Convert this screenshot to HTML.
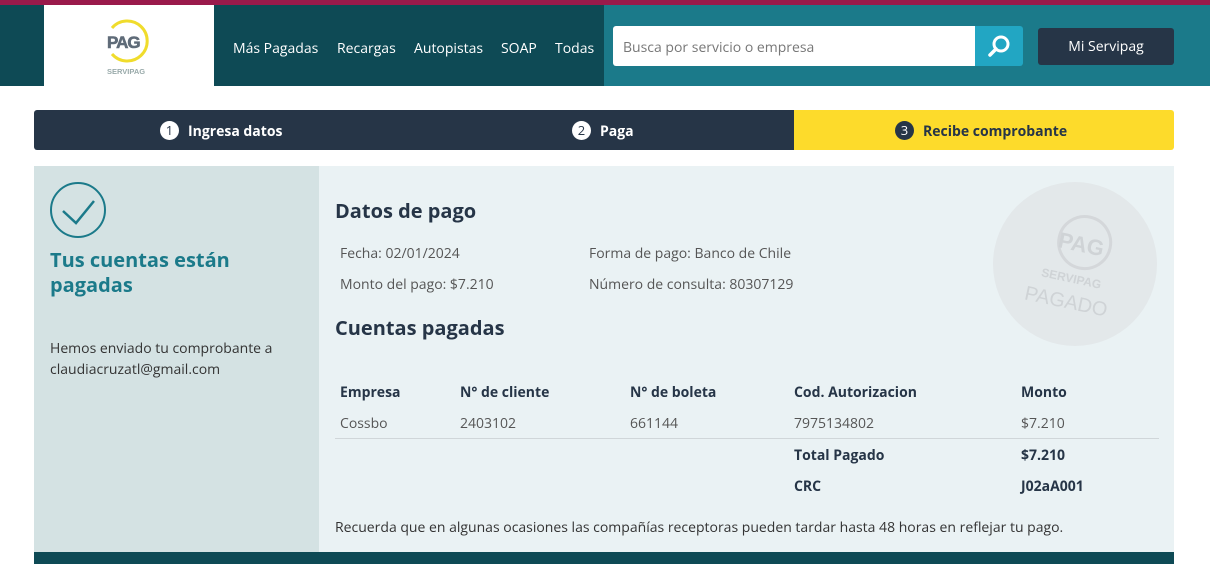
<!DOCTYPE html>
<html><head><meta charset="utf-8"><style>
*{margin:0;padding:0;box-sizing:border-box}
body{width:1210px;height:564px;overflow:hidden;background:#fff;font-family:"Open Sans","Liberation Sans",sans-serif;position:relative;color:#263547}
.a{position:absolute}
.nav{color:#fff;font-size:14px;top:39px}
.t{font-size:14px;color:#555}
.h{font-size:14px;font-weight:bold;color:#263547}
</style></head><body>
<div class="a" style="left:0;top:0;width:1210px;height:5px;background:#9a1a4b"></div>
<div class="a" style="left:0;top:5px;width:604px;height:81px;background:#0e4a55"></div>
<div class="a" style="left:604px;top:5px;width:606px;height:81px;background:#1b7a8a"></div>
<div class="a" style="left:44px;top:5px;width:170px;height:81px;background:#fff"></div>
<svg class="a" style="left:104px;top:16px" width="50" height="60" viewBox="0 0 50 60">
<path d="M8 12 A20 20 0 1 1 8 38" fill="none" stroke="#f0dc2c" stroke-width="3"/>
<text x="3" y="32" font-family="Liberation Sans" font-weight="bold" font-size="17" fill="#5f6b78" stroke="#5f6b78" stroke-width="0.6" letter-spacing="-1">PAG</text>
<text x="3" y="58" font-family="Liberation Sans" font-weight="bold" font-size="7.5" fill="#9aa">SERVIPAG</text>
</svg>
<div class="a nav" style="left:233px">Más Pagadas</div>
<div class="a nav" style="left:337px">Recargas</div>
<div class="a nav" style="left:414px">Autopistas</div>
<div class="a nav" style="left:501px">SOAP</div>
<div class="a nav" style="left:555px">Todas</div>
<div class="a" style="left:613px;top:26px;width:362px;height:40px;background:#fff;border-radius:3px 0 0 3px;font-size:14px;color:#777;padding:12px 10px">Busca por servicio o empresa</div>
<div class="a" style="left:975px;top:26px;width:48px;height:40px;background:#22a6c3;border-radius:0 3px 3px 0"></div>
<svg class="a" style="left:987px;top:34px" width="24" height="24" viewBox="0 0 24 24"><circle cx="14" cy="10" r="7" fill="none" stroke="#fff" stroke-width="3"/><path d="M9 15 L3 21" stroke="#fff" stroke-width="3.5" stroke-linecap="round"/></svg>
<div class="a" style="left:1038px;top:28px;width:136px;height:37px;background:#263547;border-radius:3px;color:#fff;font-size:14px;text-align:center;line-height:37px">Mi Servipag</div>

<div class="a" style="left:34px;top:110px;width:760px;height:40px;background:#263547;border-radius:3px 0 0 3px"></div>
<div class="a" style="left:794px;top:110px;width:380px;height:40px;background:#fddb2b;border-radius:0 3px 3px 0"></div>
<div class="a" style="left:160px;top:121px;width:19px;height:19px;border-radius:50%;background:#fff;color:#263547;font-size:13px;text-align:center;line-height:19px">1</div>
<div class="a" style="left:188px;top:122px;color:#fff;font-size:14px;font-weight:bold">Ingresa datos</div>
<div class="a" style="left:572px;top:121px;width:19px;height:19px;border-radius:50%;background:#fff;color:#263547;font-size:13px;text-align:center;line-height:19px">2</div>
<div class="a" style="left:600px;top:122px;color:#fff;font-size:14px;font-weight:bold">Paga</div>
<div class="a" style="left:895px;top:121px;width:19px;height:19px;border-radius:50%;background:#263547;color:#fff;font-size:13px;text-align:center;line-height:19px">3</div>
<div class="a" style="left:923px;top:122px;color:#263547;font-size:14px;font-weight:bold">Recibe comprobante</div>

<div class="a" style="left:34px;top:166px;width:285px;height:386px;background:#d4e2e3"></div>
<div class="a" style="left:319px;top:166px;width:855px;height:386px;background:#eaf2f4"></div>
<div class="a" style="left:34px;top:552px;width:1140px;height:12px;background:#0e4a55"></div>
<svg class="a" style="left:49px;top:181px" width="58" height="58" viewBox="0 0 58 58"><circle cx="29" cy="29" r="27" fill="none" stroke="#1b7a8a" stroke-width="2"/><path d="M14 30 L27 42 L45 20" fill="none" stroke="#1b7a8a" stroke-width="2.5"/></svg>
<div class="a" style="left:50px;top:247px;font-size:20px;font-weight:bold;color:#1b7a8a;line-height:25px">Tus cuentas están<br>pagadas</div>
<div class="a" style="left:50px;top:338px;font-size:14px;color:#333;line-height:21px">Hemos enviado tu comprobante a<br>claudiacruzatl@gmail.com</div>

<svg class="a" style="left:992px;top:181px" width="166" height="166" viewBox="0 0 166 166">
<circle cx="83" cy="83" r="82" fill="#e3e8ea"/>
<g transform="rotate(12 83 83)" fill="#cfd3d6" font-family="Liberation Sans" font-weight="bold">
<circle cx="88" cy="60" r="26" fill="none" stroke="#d4d7da" stroke-width="3"/>
<text x="62" y="70" font-size="22">PAG</text>
<text x="52" y="102" font-size="12">SERVIPAG</text>
<text x="40" y="128" font-size="20" font-weight="normal">PAGADO</text></g></svg>

<div class="a" style="left:335px;top:197px;font-size:20px;font-weight:bold">Datos de pago</div>
<div class="a t" style="left:340px;top:244px">Fecha: 02/01/2024</div>
<div class="a t" style="left:589px;top:244px">Forma de pago: Banco de Chile</div>
<div class="a t" style="left:340px;top:275px">Monto del pago: $7.210</div>
<div class="a t" style="left:589px;top:275px">Número de consulta: 80307129</div>
<div class="a" style="left:335px;top:314px;font-size:20px;font-weight:bold">Cuentas pagadas</div>
<div class="a h" style="left:340px;top:383px">Empresa</div>
<div class="a h" style="left:460px;top:383px">N° de cliente</div>
<div class="a h" style="left:630px;top:383px">N° de boleta</div>
<div class="a h" style="left:794px;top:383px">Cod. Autorizacion</div>
<div class="a h" style="left:1021px;top:383px">Monto</div>
<div class="a t" style="left:340px;top:414px">Cossbo</div>
<div class="a t" style="left:460px;top:414px">2403102</div>
<div class="a t" style="left:630px;top:414px">661144</div>
<div class="a t" style="left:794px;top:414px">7975134802</div>
<div class="a t" style="left:1021px;top:414px">$7.210</div>
<div class="a" style="left:335px;top:438px;width:824px;height:1px;background:#d0d6d9"></div>
<div class="a h" style="left:794px;top:446px">Total Pagado</div>
<div class="a h" style="left:1021px;top:446px">$7.210</div>
<div class="a h" style="left:794px;top:477px">CRC</div>
<div class="a h" style="left:1021px;top:477px">J02aA001</div>
<div class="a" style="left:335px;top:518px;font-size:14px;color:#333">Recuerda que en algunas ocasiones las compañías receptoras pueden tardar hasta 48 horas en reflejar tu pago.</div>
</body></html>
